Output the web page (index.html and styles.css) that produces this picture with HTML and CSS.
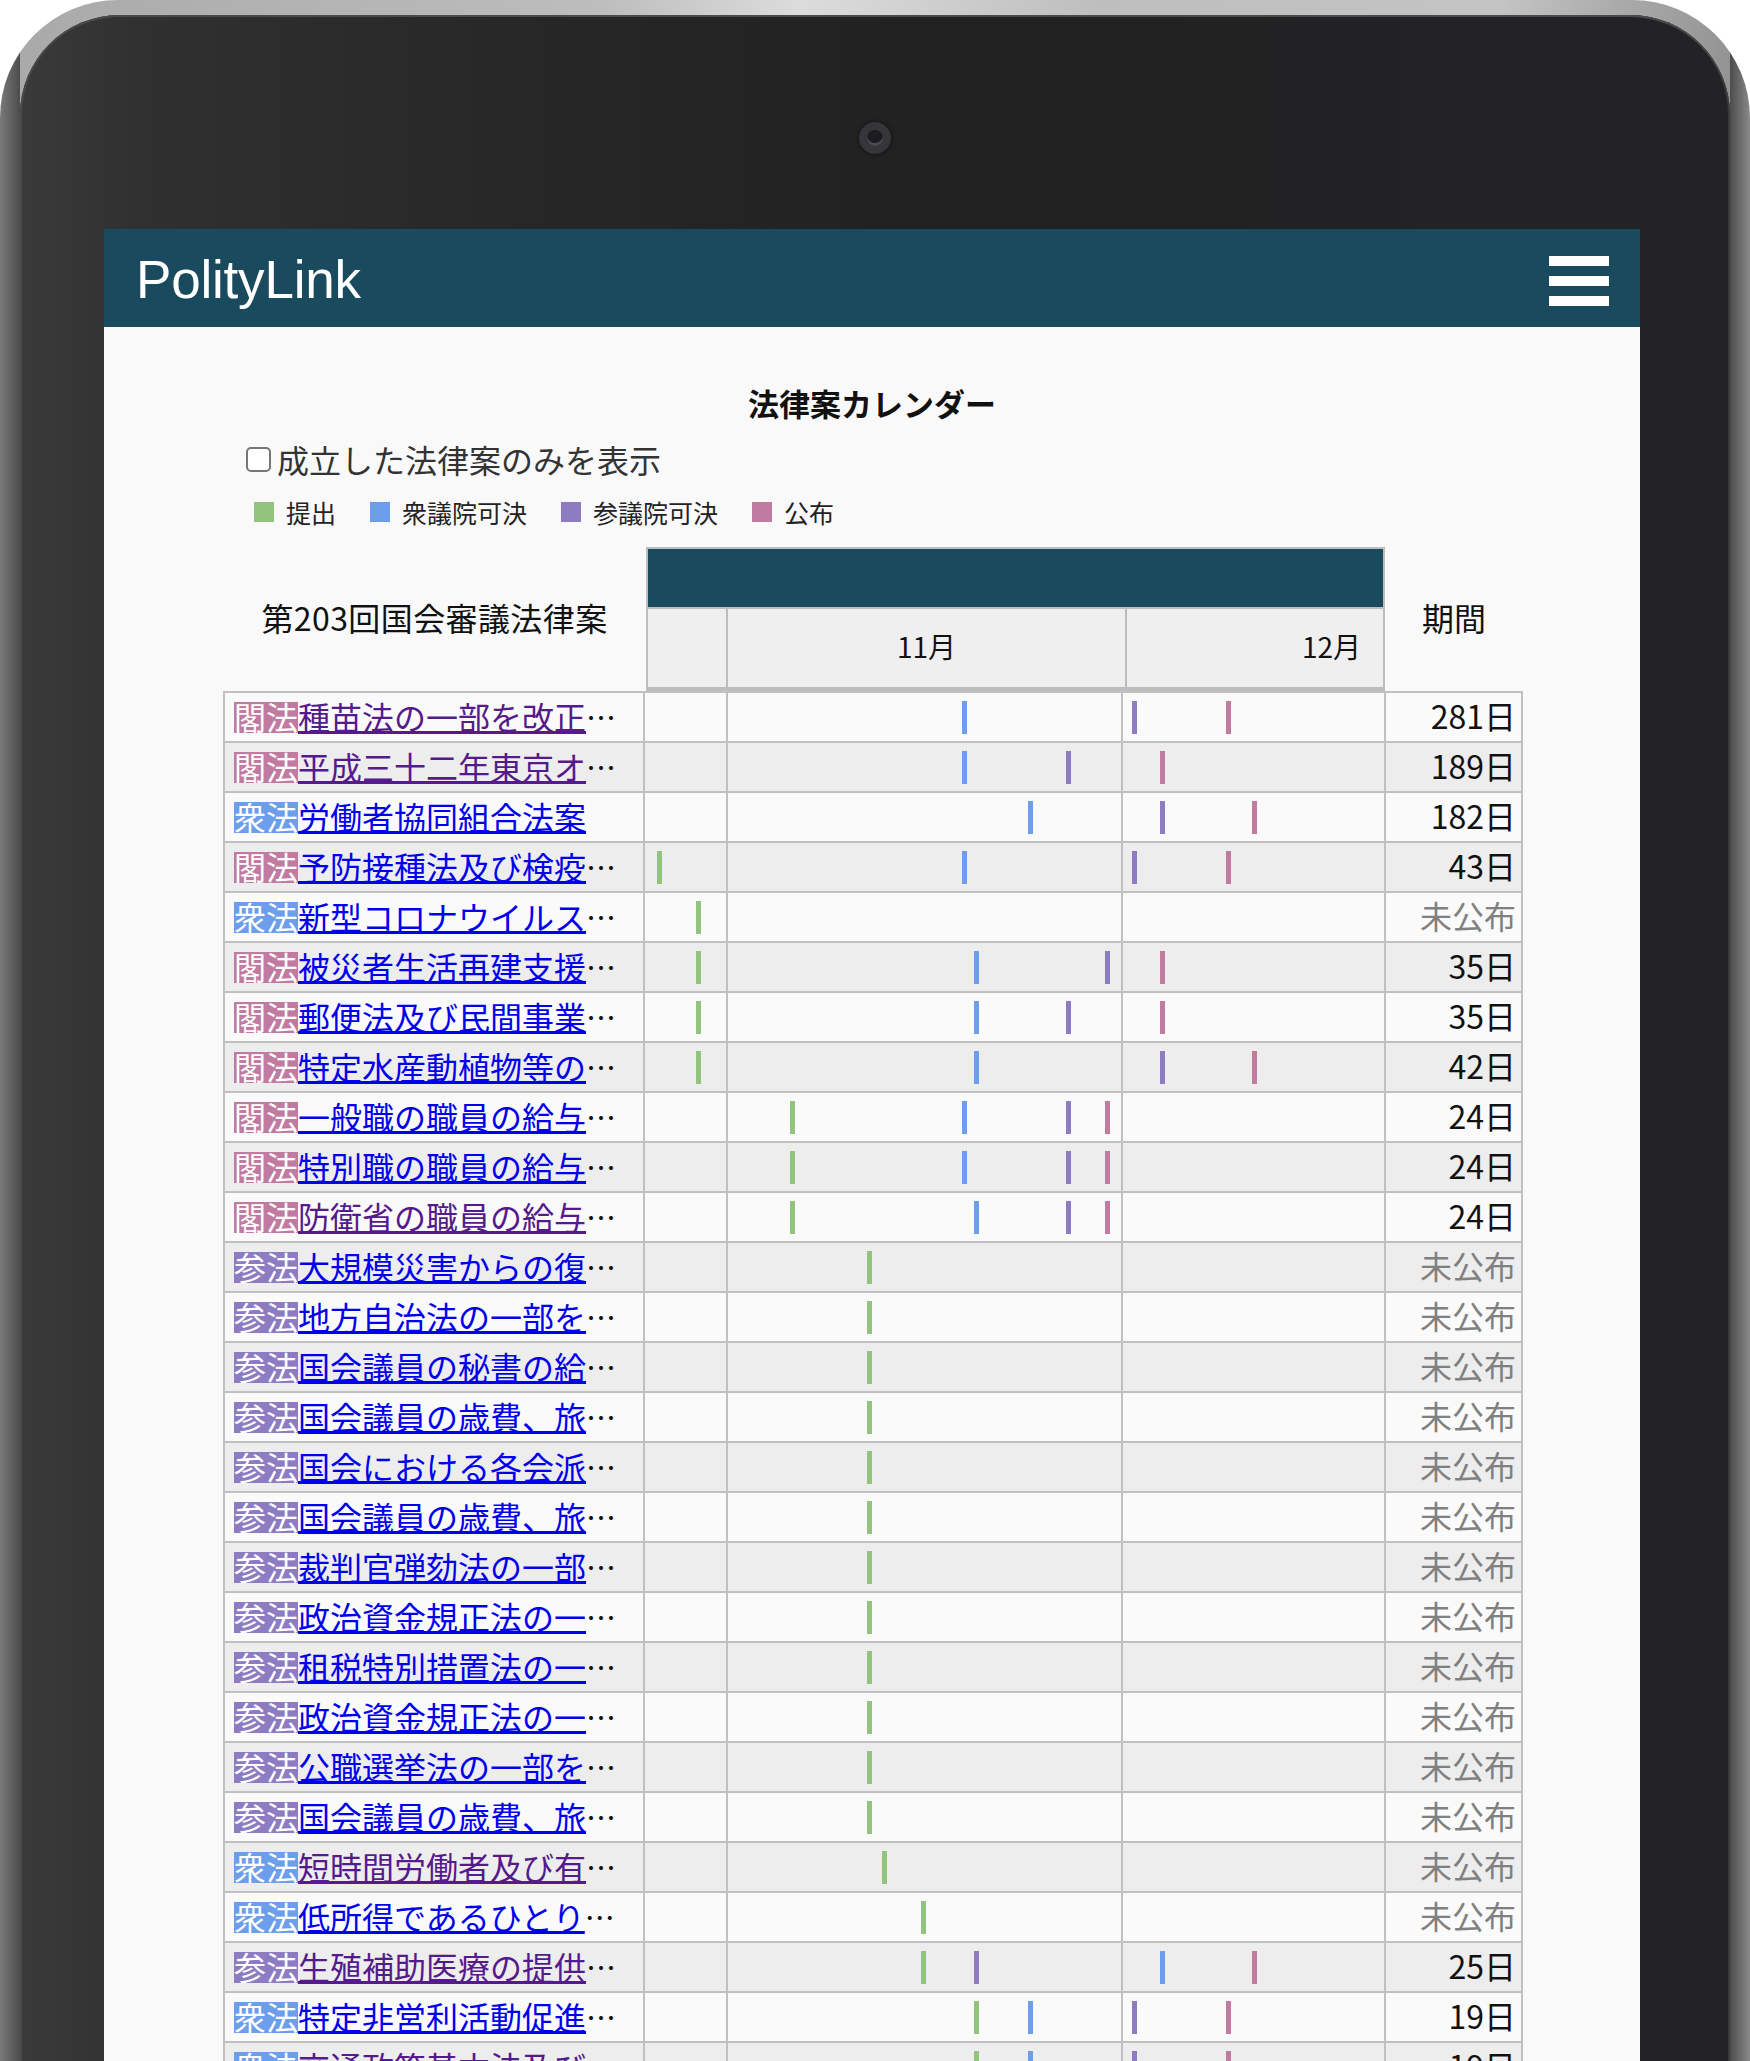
FILE: index.html
```html
<!DOCTYPE html>
<html lang="ja">
<head>
<meta charset="utf-8">
<title>PolityLink 法律案カレンダー</title>
<link rel="stylesheet" href="styles.css">
</head>
<body>
<div class="device">
  <div class="bezel">
    <div class="bezel-top"><span class="camera"><span class="lens"></span></span></div>
    <div class="screen">
      <header class="topbar">
        <span class="logo">PolityLink</span>
        <span class="menu"><i></i><i></i><i></i></span>
      </header>
      <main class="content">
        <h1 class="title">法律案カレンダー</h1>
        <label class="filter"><input type="checkbox" class="check">成立した法律案のみを表示</label>
        <div class="legend">
          <span class="lg"><i class="sq g"></i>提出</span>
          <span class="lg"><i class="sq b"></i>衆議院可決</span>
          <span class="lg"><i class="sq p"></i>参議院可決</span>
          <span class="lg"><i class="sq k"></i>公布</span>
        </div>
        <section class="calendar">
          <div class="cal-head">
            <div class="h-name">第203回国会審議法律案</div>
            <div class="gbox">
              <div class="gdark"></div>
              <div class="months">
                <div class="m m0"></div>
                <div class="m m11">11月</div>
                <div class="m m12">12月</div>
              </div>
            </div>
            <div class="h-period">期間</div>
          </div>
          <div class="rows">
            <div class="row">
              <div class="name"><span class="bd kaku">閣法</span><a class="v" href="#">種苗法の一部を改正</a><span class="ell">…</span></div>
              <div class="gc"></div>
              <div class="gc"><i class="bar b" style="left:234px"></i></div>
              <div class="gc"><i class="bar p" style="left:9px"></i><i class="bar k" style="left:103px"></i></div>
              <div class="per">281日</div>
            </div>
            <div class="row">
              <div class="name"><span class="bd kaku">閣法</span><a class="v" href="#">平成三十二年東京オ</a><span class="ell">…</span></div>
              <div class="gc"></div>
              <div class="gc"><i class="bar b" style="left:234px"></i><i class="bar p" style="left:338px"></i></div>
              <div class="gc"><i class="bar k" style="left:37px"></i></div>
              <div class="per">189日</div>
            </div>
            <div class="row">
              <div class="name"><span class="bd shu">衆法</span><a href="#">労働者協同組合法案</a></div>
              <div class="gc"></div>
              <div class="gc"><i class="bar b" style="left:300px"></i></div>
              <div class="gc"><i class="bar p" style="left:37px"></i><i class="bar k" style="left:129px"></i></div>
              <div class="per">182日</div>
            </div>
            <div class="row">
              <div class="name"><span class="bd kaku">閣法</span><a href="#">予防接種法及び検疫</a><span class="ell">…</span></div>
              <div class="gc"><i class="bar g" style="left:12px"></i></div>
              <div class="gc"><i class="bar b" style="left:234px"></i></div>
              <div class="gc"><i class="bar p" style="left:9px"></i><i class="bar k" style="left:103px"></i></div>
              <div class="per">43日</div>
            </div>
            <div class="row">
              <div class="name"><span class="bd shu">衆法</span><a href="#">新型コロナウイルス</a><span class="ell">…</span></div>
              <div class="gc"><i class="bar g" style="left:51px"></i></div>
              <div class="gc"></div>
              <div class="gc"></div>
              <div class="per na">未公布</div>
            </div>
            <div class="row">
              <div class="name"><span class="bd kaku">閣法</span><a href="#">被災者生活再建支援</a><span class="ell">…</span></div>
              <div class="gc"><i class="bar g" style="left:51px"></i></div>
              <div class="gc"><i class="bar b" style="left:246px"></i><i class="bar p" style="left:377px"></i></div>
              <div class="gc"><i class="bar k" style="left:37px"></i></div>
              <div class="per">35日</div>
            </div>
            <div class="row">
              <div class="name"><span class="bd kaku">閣法</span><a href="#">郵便法及び民間事業</a><span class="ell">…</span></div>
              <div class="gc"><i class="bar g" style="left:51px"></i></div>
              <div class="gc"><i class="bar b" style="left:246px"></i><i class="bar p" style="left:338px"></i></div>
              <div class="gc"><i class="bar k" style="left:37px"></i></div>
              <div class="per">35日</div>
            </div>
            <div class="row">
              <div class="name"><span class="bd kaku">閣法</span><a href="#">特定水産動植物等の</a><span class="ell">…</span></div>
              <div class="gc"><i class="bar g" style="left:51px"></i></div>
              <div class="gc"><i class="bar b" style="left:246px"></i></div>
              <div class="gc"><i class="bar p" style="left:37px"></i><i class="bar k" style="left:129px"></i></div>
              <div class="per">42日</div>
            </div>
            <div class="row">
              <div class="name"><span class="bd kaku">閣法</span><a href="#">一般職の職員の給与</a><span class="ell">…</span></div>
              <div class="gc"></div>
              <div class="gc"><i class="bar g" style="left:62px"></i><i class="bar b" style="left:234px"></i><i class="bar p" style="left:338px"></i><i class="bar k" style="left:377px"></i></div>
              <div class="gc"></div>
              <div class="per">24日</div>
            </div>
            <div class="row">
              <div class="name"><span class="bd kaku">閣法</span><a href="#">特別職の職員の給与</a><span class="ell">…</span></div>
              <div class="gc"></div>
              <div class="gc"><i class="bar g" style="left:62px"></i><i class="bar b" style="left:234px"></i><i class="bar p" style="left:338px"></i><i class="bar k" style="left:377px"></i></div>
              <div class="gc"></div>
              <div class="per">24日</div>
            </div>
            <div class="row">
              <div class="name"><span class="bd kaku">閣法</span><a class="v" href="#">防衛省の職員の給与</a><span class="ell">…</span></div>
              <div class="gc"></div>
              <div class="gc"><i class="bar g" style="left:62px"></i><i class="bar b" style="left:246px"></i><i class="bar p" style="left:338px"></i><i class="bar k" style="left:377px"></i></div>
              <div class="gc"></div>
              <div class="per">24日</div>
            </div>
            <div class="row">
              <div class="name"><span class="bd san">参法</span><a href="#">大規模災害からの復</a><span class="ell">…</span></div>
              <div class="gc"></div>
              <div class="gc"><i class="bar g" style="left:139px"></i></div>
              <div class="gc"></div>
              <div class="per na">未公布</div>
            </div>
            <div class="row">
              <div class="name"><span class="bd san">参法</span><a href="#">地方自治法の一部を</a><span class="ell">…</span></div>
              <div class="gc"></div>
              <div class="gc"><i class="bar g" style="left:139px"></i></div>
              <div class="gc"></div>
              <div class="per na">未公布</div>
            </div>
            <div class="row">
              <div class="name"><span class="bd san">参法</span><a href="#">国会議員の秘書の給</a><span class="ell">…</span></div>
              <div class="gc"></div>
              <div class="gc"><i class="bar g" style="left:139px"></i></div>
              <div class="gc"></div>
              <div class="per na">未公布</div>
            </div>
            <div class="row">
              <div class="name"><span class="bd san">参法</span><a href="#">国会議員の歳費、旅</a><span class="ell">…</span></div>
              <div class="gc"></div>
              <div class="gc"><i class="bar g" style="left:139px"></i></div>
              <div class="gc"></div>
              <div class="per na">未公布</div>
            </div>
            <div class="row">
              <div class="name"><span class="bd san">参法</span><a href="#">国会における各会派</a><span class="ell">…</span></div>
              <div class="gc"></div>
              <div class="gc"><i class="bar g" style="left:139px"></i></div>
              <div class="gc"></div>
              <div class="per na">未公布</div>
            </div>
            <div class="row">
              <div class="name"><span class="bd san">参法</span><a href="#">国会議員の歳費、旅</a><span class="ell">…</span></div>
              <div class="gc"></div>
              <div class="gc"><i class="bar g" style="left:139px"></i></div>
              <div class="gc"></div>
              <div class="per na">未公布</div>
            </div>
            <div class="row">
              <div class="name"><span class="bd san">参法</span><a href="#">裁判官弾劾法の一部</a><span class="ell">…</span></div>
              <div class="gc"></div>
              <div class="gc"><i class="bar g" style="left:139px"></i></div>
              <div class="gc"></div>
              <div class="per na">未公布</div>
            </div>
            <div class="row">
              <div class="name"><span class="bd san">参法</span><a href="#">政治資金規正法の一</a><span class="ell">…</span></div>
              <div class="gc"></div>
              <div class="gc"><i class="bar g" style="left:139px"></i></div>
              <div class="gc"></div>
              <div class="per na">未公布</div>
            </div>
            <div class="row">
              <div class="name"><span class="bd san">参法</span><a href="#">租税特別措置法の一</a><span class="ell">…</span></div>
              <div class="gc"></div>
              <div class="gc"><i class="bar g" style="left:139px"></i></div>
              <div class="gc"></div>
              <div class="per na">未公布</div>
            </div>
            <div class="row">
              <div class="name"><span class="bd san">参法</span><a href="#">政治資金規正法の一</a><span class="ell">…</span></div>
              <div class="gc"></div>
              <div class="gc"><i class="bar g" style="left:139px"></i></div>
              <div class="gc"></div>
              <div class="per na">未公布</div>
            </div>
            <div class="row">
              <div class="name"><span class="bd san">参法</span><a href="#">公職選挙法の一部を</a><span class="ell">…</span></div>
              <div class="gc"></div>
              <div class="gc"><i class="bar g" style="left:139px"></i></div>
              <div class="gc"></div>
              <div class="per na">未公布</div>
            </div>
            <div class="row">
              <div class="name"><span class="bd san">参法</span><a href="#">国会議員の歳費、旅</a><span class="ell">…</span></div>
              <div class="gc"></div>
              <div class="gc"><i class="bar g" style="left:139px"></i></div>
              <div class="gc"></div>
              <div class="per na">未公布</div>
            </div>
            <div class="row">
              <div class="name"><span class="bd shu">衆法</span><a class="v" href="#">短時間労働者及び有</a><span class="ell">…</span></div>
              <div class="gc"></div>
              <div class="gc"><i class="bar g" style="left:154px"></i></div>
              <div class="gc"></div>
              <div class="per na">未公布</div>
            </div>
            <div class="row">
              <div class="name"><span class="bd shu">衆法</span><a href="#">低所得であるひとり</a><span class="ell">…</span></div>
              <div class="gc"></div>
              <div class="gc"><i class="bar g" style="left:193px"></i></div>
              <div class="gc"></div>
              <div class="per na">未公布</div>
            </div>
            <div class="row">
              <div class="name"><span class="bd san">参法</span><a class="v" href="#">生殖補助医療の提供</a><span class="ell">…</span></div>
              <div class="gc"></div>
              <div class="gc"><i class="bar g" style="left:193px"></i><i class="bar p" style="left:246px"></i></div>
              <div class="gc"><i class="bar b" style="left:37px"></i><i class="bar k" style="left:129px"></i></div>
              <div class="per">25日</div>
            </div>
            <div class="row">
              <div class="name"><span class="bd shu">衆法</span><a href="#">特定非営利活動促進</a><span class="ell">…</span></div>
              <div class="gc"></div>
              <div class="gc"><i class="bar g" style="left:246px"></i><i class="bar b" style="left:300px"></i></div>
              <div class="gc"><i class="bar p" style="left:9px"></i><i class="bar k" style="left:103px"></i></div>
              <div class="per">19日</div>
            </div>
            <div class="row">
              <div class="name"><span class="bd shu">衆法</span><a class="v" href="#">交通政策基本法及び</a><span class="ell">…</span></div>
              <div class="gc"></div>
              <div class="gc"><i class="bar g" style="left:246px"></i><i class="bar b" style="left:300px"></i></div>
              <div class="gc"><i class="bar p" style="left:9px"></i><i class="bar k" style="left:103px"></i></div>
              <div class="per">19日</div>
            </div>
          </div>
        </section>
      </main>
    </div>
  </div>
</div>
</body>
</html>
```

FILE: styles.css
```css
html, body {
  margin: 0;
  padding: 0;
  width: 1750px;
  height: 2061px;
  overflow: hidden;
  background: #ffffff;
}

body {
  font-family: "Noto Sans CJK JP", "Noto Sans", sans-serif;
}

.device {
  box-sizing: border-box;
  width: 1750px;
  height: 2061px;
  padding: 15px 20px 0 20px;
  border-radius: 118px 118px 0 0;
  overflow: hidden;
  background:
    linear-gradient(90deg, #7a7a7a 0, #4c4c4c 20px, rgba(0,0,0,0) 20px, rgba(0,0,0,0) 1730px, #4c4c4c 1730px, #8a8a8a 1750px),
    linear-gradient(90deg, #a9a9a9 0, #bdbdbd 600px, #dcdcdc 800px, #bebebe 1100px, #c4c4c4 1500px, #8f8f8f 1750px);
}

.bezel {
  box-sizing: border-box;
  height: 2046px;
  padding: 0 90px 0 84px;
  border-radius: 100px 100px 0 0;
  background: linear-gradient(90deg, #3a3a3a 0, #303030 120px, #272727 500px, #212121 900px, #232226 1710px);
  box-shadow: inset 0 2px 0 #4a4a4a, inset 2px 0 0 #4a4a4a, inset -2px 0 0 #3a3a3a;
}

.bezel-top {
  height: 214px;
  margin: 0 -90px 0 -84px;
  display: flex;
  justify-content: center;
  align-items: flex-start;
  padding-top: 107px;
  box-sizing: border-box;
}

.camera {
  width: 32px;
  height: 32px;
  border-radius: 50%;
  background: #35353a;
  display: flex;
  align-items: center;
  justify-content: center;
  box-shadow: 0 0 4px rgba(0,0,0,0.6);
}

.camera .lens {
  width: 16px;
  height: 16px;
  border-radius: 50%;
  background: #1c1c20;
  box-shadow: inset 0 -3px 0 #4a4a52;
}

.screen {
  width: 1536px;
  height: 1832px;
  background: #f9f9f9;
  overflow: hidden;
}

.topbar {
  height: 98px;
  background: #1a4a5e;
  display: flex;
  align-items: center;
  justify-content: space-between;
  padding: 0 31px 0 32px;
}

.logo {
  color: #ffffff;
  font-family: "Liberation Sans", Arial, sans-serif;
  font-size: 53px;
  letter-spacing: -0.2px;
  line-height: 60px;
  padding-top: 3px;
}

.menu {
  display: flex;
  flex-direction: column;
  gap: 10px;
  width: 60px;
  margin-top: 6px;
}

.menu i {
  display: block;
  height: 10px;
  background: #ffffff;
}

.content {
  padding-top: 56px;
}

.title {
  margin: 0;
  text-align: center;
  font-size: 31px;
  line-height: 40px;
  font-weight: 700;
  color: #111;
}

.filter {
  margin: 16px 0 0 142px;
  height: 40px;
  display: flex;
  align-items: center;
  gap: 6px;
  font-size: 32px;
  color: #333;
  width: max-content;
}

.check {
  appearance: none;
  -webkit-appearance: none;
  margin: 0;
  width: 25px;
  height: 25px;
  box-sizing: border-box;
  border: 2px solid #767676;
  border-radius: 5px;
  background: #ffffff;
}

.legend {
  margin: 18px 0 0 150px;
  height: 30px;
  display: flex;
  align-items: center;
  gap: 34px;
  font-size: 25px;
  line-height: 30px;
  color: #222;
}

.lg {
  display: flex;
  align-items: center;
}

.sq {
  display: block;
  width: 20px;
  height: 20px;
  margin-right: 12px;
}

.g { background: #93c47d; }
.b { background: #6d9eeb; }
.p { background: #8e7cc3; }
.k { background: #c27ba0; }

.calendar {
  margin: 20px 0 0 119px;
  width: 1300px;
}

.cal-head {
  display: grid;
  grid-template-columns: 423px 739px 138px;
  height: 144px;
}

.h-name, .h-period {
  display: flex;
  align-items: center;
  justify-content: center;
  font-size: 32px;
  color: #111;
  padding-bottom: 4px;
}

.h-name {
  letter-spacing: 0.4px;
}

.gbox {
  box-sizing: border-box;
  border: 2px solid #bdbdbd;
  border-bottom-width: 4px;
  display: flex;
  flex-direction: column;
}

.gdark {
  height: 58px;
  background: #1a4a5e;
  border-bottom: 2px solid #bdbdbd;
}

.months {
  display: grid;
  grid-template-columns: 80px 399px 256px;
  height: 78px;
  background: #efefef;
}

.m {
  box-sizing: border-box;
  font-size: 28px;
  line-height: 74px;
  color: #111;
}

.m0, .m11 {
  border-right: 2px solid #bdbdbd;
}

.m11 {
  text-align: center;
}

.m12 {
  text-align: right;
  padding-right: 22px;
}

.rows {
  border-top: 2px solid #c0c0c0;
  border-left: 2px solid #c0c0c0;
}

.row {
  display: grid;
  grid-template-columns: 420px 83px 395px 263px 137px;
  height: 50px;
  box-sizing: border-box;
  border-bottom: 2px solid #c0c0c0;
  background: #fafafa;
}

.row:nth-child(even) {
  background: #ededed;
}

.row > div {
  box-sizing: border-box;
  border-right: 2px solid #c0c0c0;
}

.name {
  display: flex;
  align-items: center;
  padding-left: 9px;
  white-space: nowrap;
  overflow: hidden;
  font-size: 32px;
}

.bd {
  display: block;
  height: 31px;
  line-height: 29px;
  color: #ffffff;
  font-size: 32px;
}

.bd.kaku { background: #c27ba0; }
.bd.shu { background: #6d9eeb; }
.bd.san { background: #8e7cc3; }

.name a {
  color: #0000ee;
  text-decoration: underline;
  line-height: 29px;
  padding-bottom: 2px;
  text-underline-offset: 1px;
}

.name a.v {
  color: #551a8b;
}

.ell {
  color: #111;
  line-height: 29px;
  padding-bottom: 2px;
  font-size: 30px;
}

.gc {
  position: relative;
}

.bar {
  position: absolute;
  top: 8px;
  width: 5px;
  height: 33px;
}

.per {
  text-align: right;
  padding-right: 5px;
  font-size: 32px;
  line-height: 45px;
  color: #111;
}

.per.na {
  color: #808080;
}
```
